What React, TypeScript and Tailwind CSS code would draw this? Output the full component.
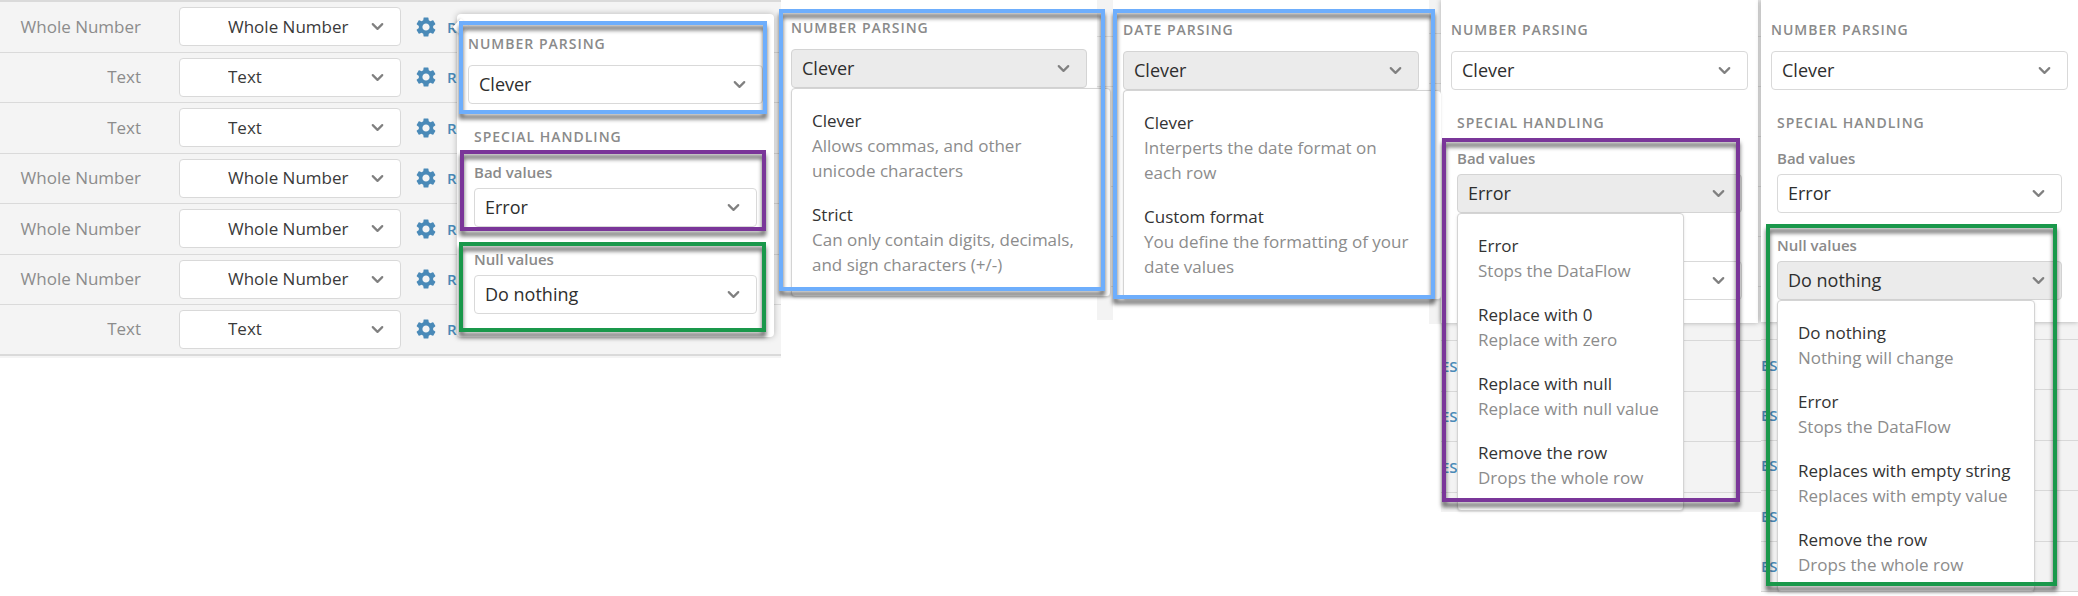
import React, { useId } from "react";
import { ChevronDown } from "lucide-react";
import { MdSettings } from "react-icons/md";

type Option = { title: string; note: string };

const columnTypes = [
  "Whole Number",
  "Text",
  "Text",
  "Whole Number",
  "Whole Number",
  "Whole Number",
  "Text",
];

const numberParsing: Option[] = [
  { title: "Clever", note: "Allows commas, and other unicode characters" },
  { title: "Strict", note: "Can only contain digits, decimals, and sign characters (+/-)" },
];

const dateParsing: Option[] = [
  { title: "Clever", note: "Interperts the date format on each row" },
  { title: "Custom format", note: "You define the formatting of your date values" },
];

const badValues: Option[] = [
  { title: "Error", note: "Stops the DataFlow" },
  { title: "Replace with 0", note: "Replace with zero" },
  { title: "Replace with null", note: "Replace with null value" },
  { title: "Remove the row", note: "Drops the whole row" },
];

const nullValues: Option[] = [
  { title: "Do nothing", note: "Nothing will change" },
  { title: "Error", note: "Stops the DataFlow" },
  { title: "Replaces with empty string", note: "Replaces with empty value" },
  { title: "Remove the row", note: "Drops the whole row" },
];

const headingClass =
  "block text-sm leading-5 font-semibold tracking-[1px] whitespace-nowrap text-[#8a8a8a] uppercase";
const captionClass = "block text-[15px] leading-5 font-semibold whitespace-nowrap text-[#8a8a8a]";

function Chevron() {
  return (
    <ChevronDown
      aria-hidden
      size={19}
      strokeWidth={2.75}
      className="pointer-events-none col-start-1 row-start-1 mr-3.5 self-center justify-self-end text-[#808080]"
    />
  );
}

function Select({ id, value, label }: { id?: string; value: string; label?: string }) {
  return (
    <div className="grid">
      <select
        id={id}
        aria-label={label}
        defaultValue={value}
        className="col-start-1 row-start-1 h-[39px] w-full appearance-none rounded border border-[#d9d9d9] bg-white pr-9 pb-px pl-2.5 text-lg leading-6 text-[#2e2e2e]"
      >
        <option>{value}</option>
      </select>
      <Chevron />
    </div>
  );
}

function OpenSelect({
  id,
  value,
  options,
  menuClass,
}: {
  id: string;
  value: string;
  options: Option[];
  menuClass: string;
}) {
  return (
    <div className="relative grid">
      <button
        id={id}
        type="button"
        aria-haspopup="listbox"
        aria-expanded="true"
        className="col-start-1 row-start-1 h-[39px] w-full rounded border border-[#d4d4d4] bg-[#ebebeb] pb-px pl-2.5 text-left text-lg leading-6 text-[#2e2e2e]"
      >
        {value}
      </button>
      <Chevron />
      <ul
        role="listbox"
        aria-labelledby={id}
        className={
          "absolute top-full left-0 z-10 flex flex-col gap-[19px] rounded border border-[#d4d4d4] bg-white pt-[19px] pl-5 text-[17px] leading-[25px] shadow-sm " +
          menuClass
        }
      >
        {options.map((option) => (
          <li key={option.title} role="option" aria-selected={option.title === value}>
            <span className="block text-[#333333]">{option.title}</span>
            <span className="block text-[#8c8c8c]">{option.note}</span>
          </li>
        ))}
      </ul>
    </div>
  );
}

function Frame({ className }: { className: string }) {
  return (
    <div
      aria-hidden
      className={
        "pointer-events-none absolute z-30 border-4 drop-shadow-[0_5px_2px_rgba(0,0,0,0.6)] " + className
      }
    />
  );
}

function Group({
  title,
  heading,
  value,
  options,
  menuClass = "",
  frame,
}: {
  title: string;
  heading?: boolean;
  value: string;
  options?: Option[];
  menuClass?: string;
  frame?: string;
}) {
  const id = useId();
  return (
    <div className={"relative flex flex-col " + (heading ? "gap-[11px]" : "gap-1.5")}>
      <label htmlFor={id} className={heading ? headingClass : captionClass}>
        {title}
      </label>
      {options ? (
        <OpenSelect id={id} value={value} options={options} menuClass={menuClass} />
      ) : (
        <Select id={id} value={value} />
      )}
      {frame && <Frame className={frame} />}
    </div>
  );
}

function SpecialHandling({ children }: { children: React.ReactNode }) {
  return (
    <section className="mt-[23px] flex flex-col px-1.5">
      <h2 className={headingClass}>Special handling</h2>
      <div className="mt-[15px] flex flex-col gap-[22px]">{children}</div>
    </section>
  );
}

function Gutter({ className, first }: { className: string; first: string }) {
  return (
    <div aria-hidden className={"flex shrink-0 flex-col overflow-hidden bg-[#f3f3f3] " + className}>
      <div className={"shrink-0 border-b border-[#dcdcdc] " + first} />
      {[0, 1, 2, 3, 4, 5].map((n) => (
        <div key={n} className="h-[50px] shrink-0 border-b border-[#dcdcdc]" />
      ))}
    </div>
  );
}

function RulesRows({ count, className }: { count: number; className: string }) {
  return (
    <ul className={"grid auto-rows-fr " + className}>
      {Array.from({ length: count }, (_, n) => (
        <li key={n} className="flex items-center border-b border-[#d8d8d8]">
          <a href="#rules" className="text-[15px] leading-5 font-semibold text-[#4a8ab8]">
            ES
          </a>
        </li>
      ))}
    </ul>
  );
}

function TypesTable() {
  return (
    <div className="relative bg-[#f4f4f4] pb-0.5">
      <table className="w-full table-fixed border-collapse">
        <colgroup>
          <col className="w-[141px]" />
          <col className="w-[260px]" />
          <col className="w-[46px]" />
          <col />
        </colgroup>
        <tbody>
          {columnTypes.map((type, n) => (
            <tr
              key={n}
              className="border-y border-[#dadada] first:border-t-2 last:border-b-2 odd:h-[51px] even:h-[50px]"
            >
              <td className="text-right text-[17px] leading-6 whitespace-nowrap text-[#8c8c8c]">{type}</td>
              <td className="pl-[38px]">
                <div className="grid">
                  <select
                    aria-label={"Type of column " + (n + 1)}
                    defaultValue={type}
                    className="col-start-1 row-start-1 h-[39px] w-full appearance-none rounded border border-[#d9d9d9] bg-white pr-9 pl-12 text-[17px] leading-6 text-[#3a3a3a]"
                  >
                    <option>{type}</option>
                  </select>
                  <Chevron />
                </div>
              </td>
              <td className="pl-[13px]">
                <button type="button" aria-label="Settings" className="block text-[#4a8ab8]">
                  <MdSettings size={24} />
                </button>
              </td>
              <td>
                <a href="#rules" className="block text-[15px] leading-5 font-semibold text-[#4a8ab8]">
                  R
                </a>
              </td>
            </tr>
          ))}
        </tbody>
      </table>
      <div className="absolute top-3.5 left-[457px] w-[317px] rounded bg-white px-[11px] pt-5 pb-[23px] shadow-[0_0_6px_rgba(0,0,0,0.25)]">
        <span
          aria-hidden
          className="absolute top-[7px] -left-0.5 size-3 rotate-45 bg-white shadow-[-1px_1px_3px_rgba(0,0,0,0.2)]"
        />
        <Group
          heading
          title="Number parsing"
          value="Clever"
          frame="-top-[13px] -right-1 -bottom-2.5 -left-[9px] border-[#6eaefc]"
        />
        <SpecialHandling>
          <Group
            title="Bad values"
            value="Error"
            frame="-top-3 -right-[9px] -bottom-1 -left-3.5 border-[#7a3699]"
          />
          <Group
            title="Null values"
            value="Do nothing"
            frame="-top-[7px] -right-[9px] -bottom-[18px] -left-[15px] border-[#1a984b]"
          />
        </SpecialHandling>
      </div>
    </div>
  );
}

const cardClass = "relative min-w-0 flex-1 bg-white px-2.5 pt-5 shadow-[0_0_5px_rgba(0,0,0,0.3)]";

export default function App() {
  return (
    <main className="grid grid-cols-[781fr_332fr_328fr_320fr_317fr] items-start bg-white pb-1 font-['Open_Sans','Noto_Sans',sans-serif]">
      <TypesTable />

      <section className="flex h-80">
        <div className="min-w-0 flex-1 bg-white px-2.5 pt-[18px]">
          <Group
            heading
            title="Number parsing"
            value="Clever"
            options={numberParsing}
            menuClass="-right-6 h-[209px] pr-8"
            frame="-top-[9px] -right-[18px] -bottom-[203px] -left-3 border-[#6eaefc]"
          />
        </div>
        <Gutter className="w-4" first="h-[37px]" />
      </section>

      <section className="flex h-[324px]">
        <div className="min-w-0 flex-1 bg-white px-2.5 pt-5">
          <Group
            heading
            title="Date parsing"
            value="Clever"
            options={dateParsing}
            menuClass="-right-[22px] h-[210px] border-r-0 pr-6"
            frame="-top-[11px] -right-4 -bottom-[209px] -left-2.5 border-[#6eaefc]"
          />
        </div>
        <Gutter className="w-3" first="h-[34px]" />
      </section>

      <section className="bg-[#f3f3f3]">
        <div className="flex h-[323px]">
          <div className={cardClass}>
            <Group heading title="Number parsing" value="Clever" />
            <SpecialHandling>
              <Group
                title="Bad values"
                value="Error"
                options={badValues}
                menuClass="h-[298px] w-[227px]"
                frame="-top-2.5 right-0.5 -bottom-[289px] -left-[15px] border-[#7a3699]"
              />
              <div className="pt-[26px]">
                <Select label="Null values" value="Do nothing" />
              </div>
            </SpecialHandling>
          </div>
          <Gutter className="w-[3px]" first="h-[37px]" />
        </div>
        <div className="h-[18px] border-b border-[#d8d8d8]" />
        <RulesRows count={3} className="h-[152px]" />
        <div className="h-[19px]" />
      </section>

      <section className="bg-[#f3f3f3]">
        <div className="flex h-[322px]">
          <div className={cardClass}>
            <Group heading title="Number parsing" value="Clever" />
            <SpecialHandling>
              <Group title="Bad values" value="Error" />
              <Group
                title="Null values"
                value="Do nothing"
                options={nullValues}
                menuClass="h-[292px] w-[258px] whitespace-nowrap"
                frame="-top-[11px] right-[5px] -bottom-[286px] -left-[11px] border-[#1a984b]"
              />
            </SpecialHandling>
          </div>
        </div>
        <div className="h-[18px] border-b border-[#d8d8d8]" />
        <RulesRows count={5} className="h-[252px]" />
      </section>
    </main>
  );
}
